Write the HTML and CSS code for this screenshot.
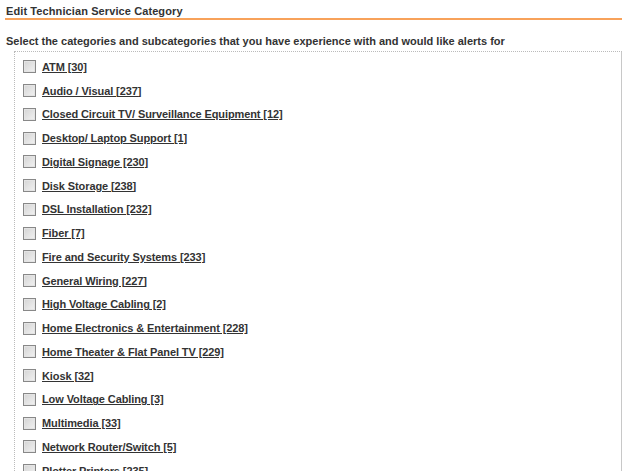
FILE: index.html
```html
<!DOCTYPE html>
<html>
<head>
<meta charset="utf-8">
<link rel="stylesheet" href="styles.css">
</head>
<body>
<h1 class="title">Edit Technician Service Category</h1>
<p class="intro">Select the categories and subcategories that you have experience with and would like alerts for</p>
<div class="box">
  <ul class="cats">
    <li class="cat"><input type="checkbox" class="cb"><a href="#">ATM [30]</a></li>
    <li class="cat"><input type="checkbox" class="cb"><a href="#">Audio / Visual [237]</a></li>
    <li class="cat"><input type="checkbox" class="cb"><a href="#">Closed Circuit TV/ Surveillance Equipment [12]</a></li>
    <li class="cat"><input type="checkbox" class="cb"><a href="#">Desktop/ Laptop Support [1]</a></li>
    <li class="cat"><input type="checkbox" class="cb"><a href="#">Digital Signage [230]</a></li>
    <li class="cat"><input type="checkbox" class="cb"><a href="#">Disk Storage [238]</a></li>
    <li class="cat"><input type="checkbox" class="cb"><a href="#">DSL Installation [232]</a></li>
    <li class="cat"><input type="checkbox" class="cb"><a href="#">Fiber [7]</a></li>
    <li class="cat"><input type="checkbox" class="cb"><a href="#">Fire and Security Systems [233]</a></li>
    <li class="cat"><input type="checkbox" class="cb"><a href="#">General Wiring [227]</a></li>
    <li class="cat"><input type="checkbox" class="cb"><a href="#">High Voltage Cabling [2]</a></li>
    <li class="cat"><input type="checkbox" class="cb"><a href="#">Home Electronics &amp; Entertainment [228]</a></li>
    <li class="cat"><input type="checkbox" class="cb"><a href="#">Home Theater &amp; Flat Panel TV [229]</a></li>
    <li class="cat"><input type="checkbox" class="cb"><a href="#">Kiosk [32]</a></li>
    <li class="cat"><input type="checkbox" class="cb"><a href="#">Low Voltage Cabling [3]</a></li>
    <li class="cat"><input type="checkbox" class="cb"><a href="#">Multimedia [33]</a></li>
    <li class="cat"><input type="checkbox" class="cb"><a href="#">Network Router/Switch [5]</a></li>
    <li class="cat"><input type="checkbox" class="cb"><a href="#">Plotter Printers [235]</a></li>
  </ul>
</div>
</body>
</html>
```
FILE: styles.css
```css
html, body {
  margin: 0;
  padding: 0;
  background: #fff;
  overflow: hidden;
}
body {
  font-family: "Liberation Sans", Arial, sans-serif;
  color: #333;
  font-weight: bold;
  font-size: 11px;
}
.title {
  margin: 0 1px 0 5px;
  padding: 4px 0 0 1px;
  font-size: 11px;
  letter-spacing: 0.1px;
  line-height: 14px;
  font-weight: bold;
  color: #333;
}
.title::after {
  content: "";
  display: block;
  height: 2px;
  margin: 0 0 0 -1px;
  background: #f8a25a;
}
.intro {
  margin: 0;
  padding: 14px 0 0 6px;
  line-height: 14px;
  height: 17px;
}
.box {
  margin-left: 14px;
  margin-right: 1px;
  border: 1px dotted #bbb;
  border-right: 1px solid #c8c8c8;
  border-bottom: none;
  padding: 3px 0 0 8px;
}
.cats {
  list-style: none;
  margin: 0;
  padding: 0;
}
.cat {
  display: flex;
  align-items: center;
  gap: 6px;
  height: 23.75px;
}
.cb {
  appearance: none;
  -webkit-appearance: none;
  margin: 0;
  width: 13px;
  height: 13px;
  border: 1px solid #888;
  background: linear-gradient(135deg, #d4d4d4 0%, #f2f2f2 100%);
  box-shadow: inset 0 0 0 1px #e4e4e4;
  flex: none;
}
.cat a {
  color: #333;
  text-decoration: underline;
  line-height: 14px;
  letter-spacing: -0.1px;
}
```
